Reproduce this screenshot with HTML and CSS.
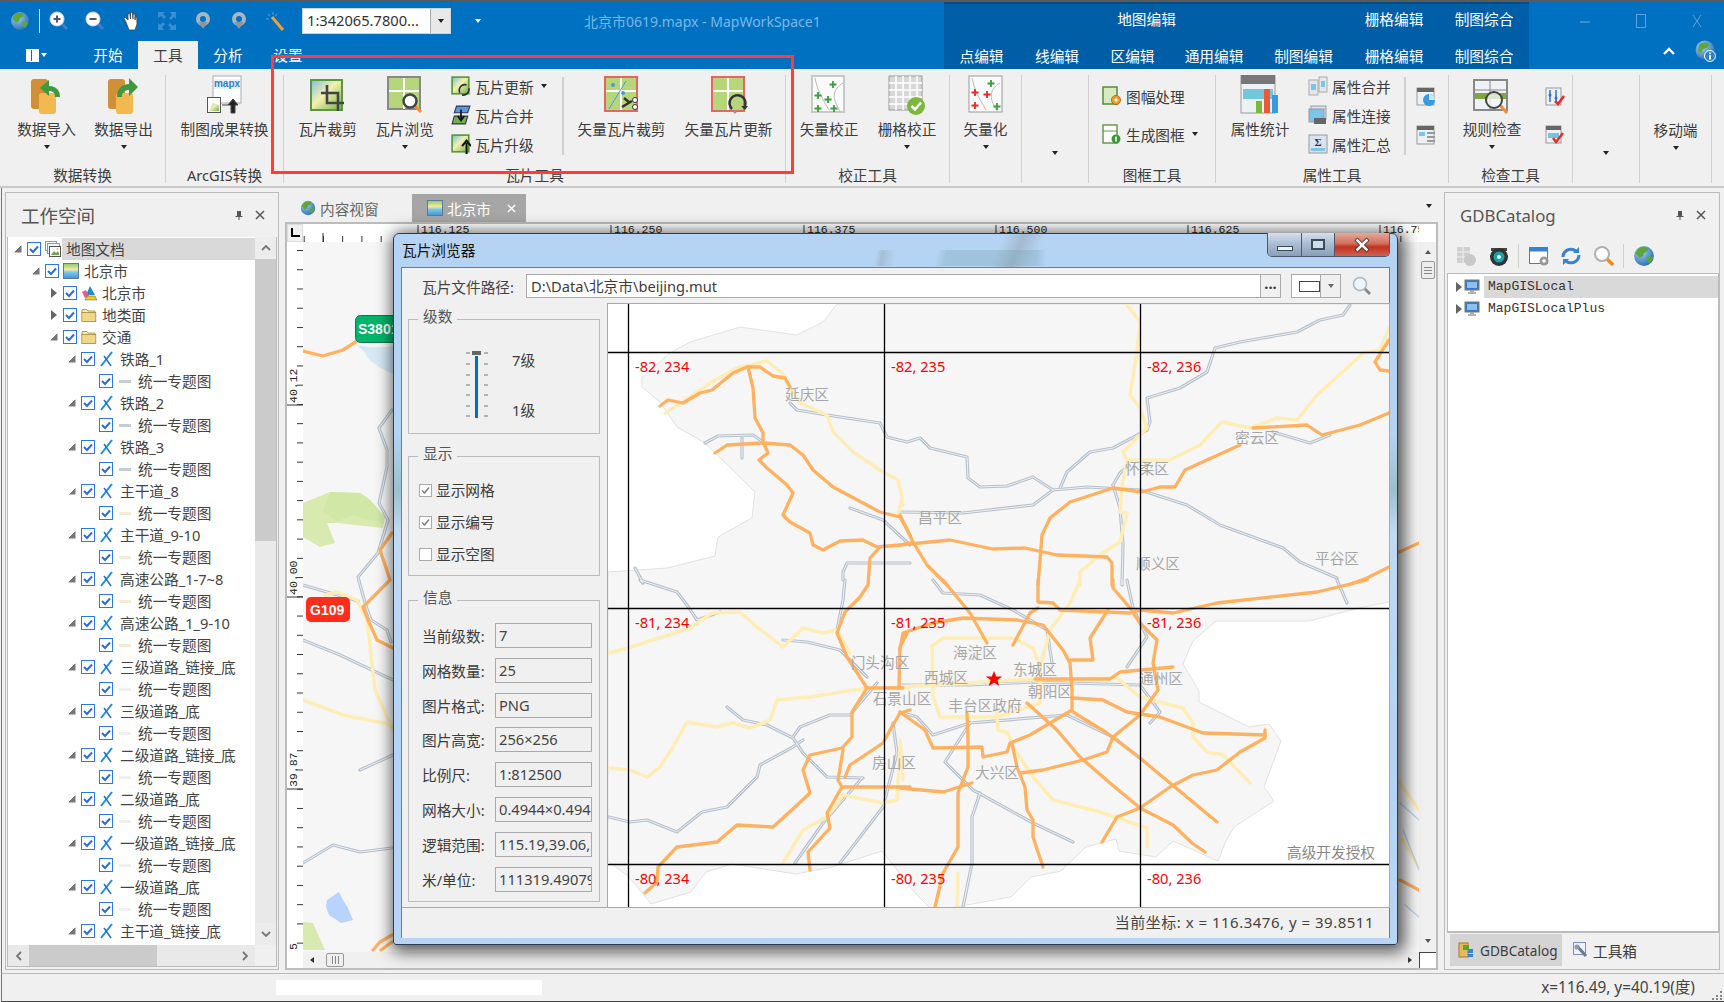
FILE: index.html
```html
<!DOCTYPE html>
<html lang="zh-CN">
<head>
    <meta charset="UTF-8">
    <title>MapWorkSpace1</title>
    <link rel="stylesheet" href="styles.css">
</head>
<body>
<svg class="defs" xmlns="http://www.w3.org/2000/svg">
    <defs>
        <linearGradient id="g-tile" x1="0" y1="0" x2="1" y2="1"><stop offset="0" stop-color="#7cc0e0"/><stop offset=".45" stop-color="#f4f0b0"/><stop offset="1" stop-color="#6fb24c"/></linearGradient>
        <linearGradient id="g-map" x1="0" y1="0" x2="0" y2="1"><stop offset="0" stop-color="#8fc66a"/><stop offset=".4" stop-color="#f3e9a0"/><stop offset=".6" stop-color="#7cc4ea"/><stop offset="1" stop-color="#3f96d8"/></linearGradient>
        <radialGradient id="g-globe" cx=".35" cy=".3" r=".8"><stop offset="0" stop-color="#9fd0f0"/><stop offset="1" stop-color="#2469b0"/></radialGradient>
    </defs>
    <symbol id="globe" viewBox="0 0 20 20"><circle cx="10" cy="10" r="9" fill="url(#g-globe)"/><path d="M5 3c3-2 7-1 9 0l-1 3-3 1-1 3-3 2-2-3-2-1z M12 11l4-1 2 2-3 5-2-2z" fill="#5fa53a"/></symbol>
    <symbol id="q-in" viewBox="0 0 20 20"><path d="M12 12l6 6" stroke="#3f7fd0" stroke-width="3"/><circle cx="8" cy="8" r="7" fill="#fff" stroke="#cfd8e0"/><path d="M4.5 8h7M8 4.5v7" stroke="#556" stroke-width="2"/></symbol>
    <symbol id="q-out" viewBox="0 0 20 20"><path d="M12 12l6 6" stroke="#3f7fd0" stroke-width="3"/><circle cx="8" cy="8" r="7" fill="#fff" stroke="#cfd8e0"/><path d="M4.5 8h7" stroke="#556" stroke-width="2"/></symbol>
    <symbol id="q-hand" viewBox="0 0 20 20"><path d="M5 11L3 7.5l1.5-1L7 9V3l1.8-.5L9.5 8V1.5h1.8L12 8V3h1.8l.4 6V6h1.600L16 13l-2 6H8z" fill="#fff" stroke="#444" stroke-width=".8"/></symbol>
    <symbol id="q-full" viewBox="0 0 20 20"><path d="M1 1h7L6 3l3 3-2 2-3-3-3 2z M19 1v7l-2-2-3 3-2-2 3-3-2-3z M1 19v-7l2 2 3-3 2 2-3 3 2 3z M19 19h-7l2-2-3-3 2-2 3 3 3-2z" fill="#3b8ed2"/></symbol>
    <symbol id="q-prev" viewBox="0 0 20 20"><circle cx="10" cy="8" r="7" fill="#a9b5bf"/><circle cx="10" cy="8" r="3" fill="#0070c0"/><path d="M5 11h10l-5 7z" fill="#8b979f"/></symbol>
    <symbol id="q-wand" viewBox="0 0 20 20"><path d="M7 6l11 13" stroke="#f0a030" stroke-width="3"/><path d="M3 3l2 2M8 1v3M1 8h3M12 3l-2 2" stroke="#3b8ed2" stroke-width="1.6"/></symbol>
    <symbol id="chk" viewBox="0 0 14 14"><rect x=".5" y=".5" width="13" height="13" fill="#fff" stroke="#2a7ae2"/><path d="M3 7l3 3 5-5.5" fill="none" stroke="#2a6fd0" stroke-width="2"/></symbol>
    <symbol id="tick" viewBox="0 0 13 13"><rect x=".5" y=".5" width="12" height="12" fill="#fff" stroke="#aaa"/><path d="M3 6.5L5.5 9 10 3.5" fill="none" stroke="#777" stroke-width="1.4"/></symbol>
    <symbol id="i-doc" viewBox="0 0 16 16"><rect x=".5" y=".5" width="11" height="9" fill="#fff" stroke="#6d9fd0"/><rect x="2.5" y="2.5" width="12" height="10" fill="#eef6ff" stroke="#6d9fd0"/><rect x="4.5" y="5.5" width="11" height="10" fill="#fff" stroke="#555"/><path d="M6 14l3-4 2 2 2-2 1.5 4z" fill="#6aa84f"/><circle cx="12.5" cy="8" r="1" fill="#f0c040"/></symbol>
    <symbol id="i-map" viewBox="0 0 16 16"><rect x=".5" y=".5" width="15" height="15" fill="url(#g-map)" stroke="#5a7a9a"/></symbol>
    <symbol id="i-poly" viewBox="0 0 16 16"><path d="M9 1l5 9H5z" fill="#1f8ad8"/><path d="M1 7l4-2 3 6-4 2z" fill="#e85c90"/><path d="M4 15l2-4h8l2 4z" fill="#f0cc20" stroke="#333" stroke-width=".4"/></symbol>
    <symbol id="i-folder" viewBox="0 0 16 16"><path d="M1 4V2.5h5L7 4h7v2H1z" fill="#f7eaa8" stroke="#a08a40" stroke-width=".8"/><rect x=".8" y="5.5" width="14" height="9" fill="#f1d888" stroke="#a08a40" stroke-width=".8"/></symbol>
    <symbol id="i-line" viewBox="0 0 16 16"><path d="M2 15L13 1" stroke="#1a8fe0" stroke-width="2"/><path d="M5 5l7 10" stroke="#2a6fd0" stroke-width="1.5"/></symbol>
    <symbol id="i-pin" viewBox="0 0 10 10"><path d="M3 1h4v5h1.5v1h-3v3h-1V7h-3V6H3z" fill="#555"/></symbol>
    <symbol id="i-x" viewBox="0 0 10 10"><path d="M1 1l8 8M9 1l-8 8" stroke="#555" stroke-width="1.5"/></symbol>
    <symbol id="i-pc" viewBox="0 0 16 16"><rect x="1" y="1" width="14" height="10" fill="#3a78c8" stroke="#777"/><rect x="3" y="3" width="10" height="6" fill="#8cc0ee"/><path d="M4 14h8M6 12h4" stroke="#999" stroke-width="1.5"/></symbol>
    <symbol id="i-search" viewBox="0 0 20 20"><path d="M12 12l6 6" stroke="#8a8a8a" stroke-width="3"/><circle cx="8" cy="8" r="6.5" fill="#eef4fa" stroke="#a8b8c4" stroke-width="1.5"/></symbol>

    <symbol id="b-import" viewBox="0 0 40 40"><rect x="4" y="4" width="17" height="30" rx="3" fill="#cf9038"/><rect x="12" y="18" width="17" height="21" rx="3" fill="#f1b94f"/><path d="M33 22c0-7-4-11-11-11V5l-9 8 9 8v-5c4 0 6 2 6 6z" fill="#3f9a3f"/></symbol>
    <symbol id="b-export" viewBox="0 0 40 40"><rect x="4" y="4" width="17" height="30" rx="3" fill="#cf9038"/><rect x="12" y="18" width="17" height="21" rx="3" fill="#f1b94f"/><path d="M13 22c0-8 5-13 12-13V3l9 9-9 9v-6c-4 0-7 2-7 7z" fill="#3f9a3f"/></symbol>
    <symbol id="b-crop" viewBox="0 0 40 40"><rect x="3" y="5" width="31" height="30" fill="url(#g-tile)" stroke="#5a9a3c" stroke-width="2"/><path d="M19 10v18h17M13 18h17v18" fill="none" stroke="#444" stroke-width="2.6"/></symbol>
    <symbol id="b-browse" viewBox="0 0 40 40"><rect x="3" y="2" width="32" height="32" fill="#b5d77a" stroke="#888" stroke-width="2"/><path d="M19 3v31M4 16h30" stroke="#fff" stroke-width="2"/><path d="M30 31l6 6" stroke="#f09030" stroke-width="3"/><circle cx="25" cy="26" r="6.5" fill="#fff" stroke="#444" stroke-width="2.5"/></symbol>
    <symbol id="b-vcrop" viewBox="0 0 40 40"><rect x="3" y="2" width="32" height="34" fill="#b5d77a" stroke="#e86464" stroke-width="2"/><path d="M19 3v32M4 16h30" stroke="#fff" stroke-width="2"/><path d="M7 34L24 6" stroke="#4a9ae0"/><circle cx="11" cy="10" r="2" fill="#4a9ae0"/><circle cx="21" cy="18" r="2" fill="#4a9ae0"/><path d="M22 23l6 5M20 32l10-6" stroke="#333" stroke-width="2.5"/><circle cx="33" cy="25" r="2.5" fill="#fff" stroke="#333"/><circle cx="33" cy="32" r="2.5" fill="#fff" stroke="#333"/></symbol>
    <symbol id="b-vupd" viewBox="0 0 40 40"><rect x="3" y="2" width="32" height="34" fill="#b5d77a" stroke="#e86464" stroke-width="2"/><path d="M19 3v32M4 16h30" stroke="#fff" stroke-width="2"/><path d="M23 34a8 8 0 1 1 13-3" fill="none" stroke="#333" stroke-width="2.5"/><path d="M32 31h7l-3 4z" fill="#333"/><circle cx="26" cy="37" r="1.5" fill="#999"/></symbol>
    <symbol id="b-vcorr" viewBox="0 0 40 40"><rect x="3" y="1" width="32" height="36" fill="#fafafa" stroke="#c8c8c8" stroke-width="2"/><path d="M6 3c3 14 6 18 14 32M34 8C24 14 22 22 31 36" fill="none" stroke="#bbb"/><path d="M24 6v7m-3.5-3.5h7M9 17v7m-3.5-3.5h7M19 21v7m-3.5-3.5h7M9 30v7m-3.5-3.5h7M25 30v7m-3.5-3.5h7" stroke="#3aa03a" stroke-width="1.8"/></symbol>
    <symbol id="b-rcorr" viewBox="0 0 40 40"><rect x="2" y="1" width="33" height="34" fill="#d8d8d8" stroke="#999"/><path d="M9 1v34M16 1v34M23 1v34M30 1v34M2 8h33M2 15h33M2 22h33M2 29h33" stroke="#fff" stroke-width="1.5"/><circle cx="29" cy="31" r="9" fill="#7cb83c"/><path d="M24.5 31l3.5 3.5 6-7" fill="none" stroke="#fff" stroke-width="2.5"/></symbol>
    <symbol id="b-vec" viewBox="0 0 40 40"><rect x="3" y="1" width="33" height="36" fill="#fafafa" stroke="#999"/><path d="M6 3c3 14 6 18 14 32M34 8C24 14 22 22 31 36" fill="none" stroke="#bbb"/><path d="M25 5v7m-3.5-3.5h7M31 28v7m-3.5-3.5h7" stroke="#3aa03a" stroke-width="1.8"/><path d="M9 14v7m-3.5-3.5h7M21 16v7m-3.5-3.5h7M9 27v7m-3.5-3.5h7" stroke="#e82a2a" stroke-width="1.8"/></symbol>
    <symbol id="b-stats" viewBox="0 0 40 40"><rect x="1" y="0" width="34" height="38" fill="#eef1f4" stroke="#999"/><rect x="1" y="0" width="34" height="9" fill="#777"/><rect x="3" y="14" width="30" height="10" fill="#6fc8dc"/><rect x="16" y="26" width="6" height="12" fill="#7cb83c"/><rect x="24" y="14" width="6" height="24" fill="#e85a3a"/><rect x="32" y="20" width="6" height="18" fill="#3a9ae0"/></symbol>
    <symbol id="b-rule" viewBox="0 0 40 40"><rect x="2" y="5" width="33" height="30" fill="#eef2f6" stroke="#888" stroke-width="2"/><path d="M18 6v28M3 15h31" stroke="#888"/><rect x="3" y="18" width="31" height="6" fill="#7ea83c"/><path d="M28 30l7 8" stroke="#f09030" stroke-width="3"/><circle cx="22" cy="25" r="8" fill="#f4f4f4" fill-opacity=".8" stroke="#444" stroke-width="2"/></symbol>

    <symbol id="s-upd" viewBox="0 0 18 18"><rect x="1" y="1" width="15" height="15" fill="url(#g-tile)" stroke="#5a9a3c" stroke-width="1.5"/><path d="M8 15a5 5 0 0 1 6-7M10 17a5 5 0 0 0 6-6" fill="none" stroke="#333" stroke-width="1.5"/></symbol>
    <symbol id="s-merge" viewBox="0 0 18 18"><path d="M5 1h12l-2 6H3z" fill="#5a9ae0" stroke="#335"/><path d="M3 10h12l-2 7H1z" fill="#6fb24c" stroke="#335"/><path d="M9 4v9m-3-3l3 4 3-4" fill="none" stroke="#111" stroke-width="1.5"/></symbol>
    <symbol id="s-up" viewBox="0 0 18 18"><rect x="1" y="1" width="15" height="15" fill="url(#g-tile)" stroke="#5a9a3c" stroke-width="1.5"/><path d="M14 18V8m-4 3l4-5 4 5" fill="none" stroke="#111" stroke-width="1.8"/></symbol>
    <symbol id="s-proc" viewBox="0 0 20 20"><rect x="1" y="1" width="14" height="17" fill="#d8eac0" stroke="#5a8a3c" stroke-width="1.5"/><circle cx="14" cy="14" r="4.5" fill="#f0a030" stroke="#a86a10"/><circle cx="14" cy="14" r="1.5" fill="#fff"/></symbol>
    <symbol id="s-gen" viewBox="0 0 20 20"><rect x="1" y="1" width="14" height="18" fill="#fff" stroke="#6a9a4c" stroke-width="1.5"/><path d="M1 7h14" stroke="#6a9a4c"/><circle cx="14" cy="15" r="4.5" fill="#3a9a3a"/><path d="M14 12.5v5" stroke="#fff" stroke-width="1.5"/></symbol>
    <symbol id="s-amerge" viewBox="0 0 20 20"><rect x="1" y="4" width="9" height="15" fill="#e4e8ec" stroke="#aaa"/><rect x="11" y="1" width="8" height="15" fill="#e4e8ec" stroke="#aaa"/><rect x="3" y="8" width="5" height="6" fill="#7cc4ea"/><rect x="13" y="5" width="4" height="6" fill="#7cc4ea"/></symbol>
    <symbol id="s-ajoin" viewBox="0 0 20 20"><rect x="3" y="1" width="15" height="13" fill="#d8e4f0" stroke="#999"/><rect x="1" y="4" width="15" height="13" fill="#7cc4ea" stroke="#999"/><rect x="6" y="13" width="12" height="6" fill="#666"/></symbol>
    <symbol id="s-pie" viewBox="0 0 20 20"><rect x="1" y="1" width="17" height="17" fill="#eef1f4" stroke="#999"/><rect x="1" y="1" width="17" height="4" fill="#666"/><circle cx="13" cy="13" r="6" fill="#3a9ae0"/><path d="M13 13V7a6 6 0 0 1 6 6z" fill="#cfe6f8"/></symbol>
    <symbol id="s-list" viewBox="0 0 20 20"><rect x="1" y="1" width="17" height="18" fill="#eef1f4" stroke="#999"/><rect x="1" y="1" width="17" height="4" fill="#666"/><rect x="3" y="7" width="6" height="4" fill="#7cc4ea"/><path d="M11 8h8M11 12h8M11 16h8" stroke="#999" stroke-width="2"/></symbol>
    <symbol id="s-chk1" viewBox="0 0 20 20"><rect x="1" y="1" width="15" height="17" fill="#eef1f4" stroke="#999"/><path d="M5 3v12M11 3v12" stroke="#2a6fd0" stroke-width="1.5"/><circle cx="5" cy="8" r="1.5" fill="#2a6fd0"/><circle cx="11" cy="11" r="1.5" fill="#2a6fd0"/><path d="M10 14l3 3 6-8" fill="none" stroke="#e82a2a" stroke-width="2.5"/></symbol>
    <symbol id="s-chk2" viewBox="0 0 20 20"><rect x="1" y="1" width="15" height="17" fill="#eef1f4" stroke="#999"/><rect x="1" y="1" width="15" height="4" fill="#666"/><rect x="3" y="8" width="11" height="5" fill="#6fc8dc"/><path d="M8 13l3 4 7-9" fill="none" stroke="#e82a2a" stroke-width="2.5"/></symbol>

    <symbol id="t-db" viewBox="0 0 22 22"><rect x="2" y="2" width="13" height="16" fill="#d0d0d0"/><path d="M2 7h13M2 12h13M8 2v16" stroke="#f0f0f0"/><circle cx="15" cy="15" r="6" fill="#c8c8c8"/></symbol>
    <symbol id="t-cam" viewBox="0 0 22 22"><path d="M3 3h16v3H3z" fill="#444"/><circle cx="11" cy="12" r="9" fill="#333"/><circle cx="11" cy="12" r="5.5" fill="#19a0a8"/><circle cx="11" cy="12" r="2" fill="#dff"/></symbol>
    <symbol id="t-set" viewBox="0 0 22 22"><rect x="1.5" y="2.5" width="18" height="16" fill="#fff" stroke="#3a82d0"/><rect x="1.5" y="2.5" width="18" height="4" fill="#3a82d0"/><circle cx="16" cy="16" r="4.5" fill="#999"/><circle cx="16" cy="16" r="1.8" fill="#fff"/></symbol>
    <symbol id="t-ref" viewBox="0 0 22 22"><path d="M3 12a8 8 0 0 1 13-6M19 10a8 8 0 0 1-13 6" fill="none" stroke="#3a82d0" stroke-width="3"/><path d="M13 8l6 0 0-6zM9 14l-6 0 0 6z" fill="#3a82d0"/></symbol>
    <symbol id="t-find" viewBox="0 0 22 22"><path d="M13 13l7 7" stroke="#f08a20" stroke-width="3.5"/><circle cx="9" cy="9" r="7" fill="#fff" stroke="#b0b0b0" stroke-width="2"/></symbol>
</svg>

<div class="app">
    <div class="top">
        <div class="top-main">
            <div class="qat">
                <svg class="q-globe"><use href="#globe"/></svg>
                <span class="q-sep"></span>
                <div class="q-icons">
                    <svg class="q-ic"><use href="#q-in"/></svg>
                    <svg class="q-ic"><use href="#q-out"/></svg>
                    <svg class="q-ic"><use href="#q-hand"/></svg>
                    <svg class="q-ic"><use href="#q-full"/></svg>
                    <svg class="q-ic"><use href="#q-prev"/></svg>
                    <svg class="q-ic"><use href="#q-prev"/></svg>
                    <svg class="q-ic"><use href="#q-wand"/></svg>
                </div>
                <div class="scale-combo"><span class="scale-value">1:342065.7800...</span><span class="scale-btn"><i class="arrow"></i></span></div>
                <i class="arrow arrow-white q-more"></i>
                <span class="app-title">北京市0619.mapx - MapWorkSpace1</span>
            </div>
            <div class="tabs">
                <div class="file-btn"><span class="file-ic"></span><i class="arrow arrow-white"></i></div>
                <div class="tab">开始</div>
                <div class="tab active">工具</div>
                <div class="tab">分析</div>
                <div class="tab">设置</div>
            </div>
        </div>
        <div class="context">
            <div class="ctx-head ctx-wide">地图编辑</div>
            <div class="ctx-head">栅格编辑</div>
            <div class="ctx-head">制图综合</div>
            <div>点编辑</div><div>线编辑</div><div>区编辑</div><div>通用编辑</div><div>制图编辑</div><div>栅格编辑</div><div>制图综合</div>
        </div>
        <div class="top-right">
            <div class="win-btns">
                <svg class="win-ic" viewBox="0 0 14 14"><path d="M2 8h10" stroke="#5aa2e0" stroke-width="1.2"/></svg>
                <svg class="win-ic" viewBox="0 0 14 14"><rect x="2.5" y="0.5" width="9" height="13" fill="none" stroke="#5aa2e0"/></svg>
                <svg class="win-ic" viewBox="0 0 14 14"><path d="M3 1l8 12M11 1L3 13" stroke="#5aa2e0"/></svg>
            </div>
            <div class="help-row">
                <svg class="chev" viewBox="0 0 12 8"><path d="M1 7l5-5 5 5" fill="none" stroke="#fff" stroke-width="2.4"/></svg>
                <svg class="help" viewBox="0 0 22 22"><circle cx="10" cy="10" r="9.5" fill="url(#g-globe)"/><path d="M4 5c3-3 8-3 10-1l-2 4-4 1-2 4-3-2z" fill="#5fa53a"/><circle cx="15" cy="16" r="5.5" fill="#2a7fd0" stroke="#fff"/><rect x="14" y="15" width="2" height="4.5" fill="#fff"/><rect x="14" y="12.5" width="2" height="1.5" fill="#fff"/></svg>
            </div>
        </div>
    </div>

    <div class="ribbon">
        <div class="group w-data">
            <div class="group-body pad-8">
                <div class="big w-77"><svg class="big-ic"><use href="#b-import"/></svg><span>数据导入</span><i class="arrow"></i></div>
                <div class="big w-77"><svg class="big-ic"><use href="#b-export"/></svg><span>数据导出</span><i class="arrow"></i></div>
            </div>
            <div class="group-label">数据转换</div>
        </div>
        <div class="group w-arc">
            <div class="group-body">
                <div class="big w-full">
                    <svg class="big-ic" viewBox="0 0 40 40"><rect x="8" y="1" width="28" height="27" fill="#fff" stroke="#aaa"/><rect x="9" y="4" width="26" height="10" fill="#eaf3fb"/><text x="22" y="12" text-anchor="middle" font-family="Liberation Sans" font-size="10" font-weight="bold" fill="#2a7fd0">mapx</text><rect x="2.5" y="22.5" width="13" height="15" fill="#fff" stroke="#555"/><path d="M4 36l4-8 6 2v6z" fill="url(#g-tile)"/><path d="M17 30h6M26 38v-8h-3l5-6 5 6h-3v8z" fill="#222" stroke="#444"/></svg>
                    <span>制图成果转换</span>
                </div>
            </div>
            <div class="group-label">ArcGIS转换</div>
        </div>
        <div class="group w-tile">
            <div class="group-body pad-5">
                <div class="big w-77"><svg class="big-ic"><use href="#b-crop"/></svg><span>瓦片裁剪</span></div>
                <div class="big w-77"><svg class="big-ic"><use href="#b-browse"/></svg><span>瓦片浏览</span><i class="arrow"></i></div>
                <div class="small-col tile-col">
                    <div class="small"><svg class="small-ic"><use href="#s-upd"/></svg><span>瓦片更新</span><i class="arrow small-arrow"></i></div>
                    <div class="small"><svg class="small-ic"><use href="#s-merge"/></svg><span>瓦片合并</span></div>
                    <div class="small"><svg class="small-ic"><use href="#s-up"/></svg><span>瓦片升级</span></div>
                </div>
                <span class="inner-sep"></span>
                <div class="big w-107 ml-4"><svg class="big-ic"><use href="#b-vcrop"/></svg><span>矢量瓦片裁剪</span></div>
                <div class="big w-107"><svg class="big-ic"><use href="#b-vupd"/></svg><span>矢量瓦片更新</span></div>
            </div>
            <div class="group-label">瓦片工具</div>
        </div>
        <div class="group w-corr">
            <div class="group-body pad-4">
                <div class="big w-78"><svg class="big-ic"><use href="#b-vcorr"/></svg><span>矢量校正</span></div>
                <div class="big w-78"><svg class="big-ic"><use href="#b-rcorr"/></svg><span>栅格校正</span><i class="arrow"></i></div>
            </div>
            <div class="group-label">校正工具</div>
        </div>
        <div class="group w-vec">
            <div class="group-body">
                <div class="big w-full"><svg class="big-ic"><use href="#b-vec"/></svg><span>矢量化</span><i class="arrow"></i></div>
            </div>
        </div>
        <div class="group w-more">
            <div class="group-body">
                <div class="big w-full empty"><i class="arrow"></i></div>
            </div>
        </div>
        <div class="group w-frame">
            <div class="group-body">
                <div class="frame-col">
                    <div class="small"><svg class="small-ic"><use href="#s-proc"/></svg><span>图幅处理</span></div>
                    <div class="small"><svg class="small-ic"><use href="#s-gen"/></svg><span>生成图框</span><i class="arrow small-arrow"></i></div>
                </div>
            </div>
            <div class="group-label">图框工具</div>
        </div>
        <div class="group w-attr">
            <div class="group-body">
                <div class="big w-88"><svg class="big-ic"><use href="#b-stats"/></svg><span>属性统计</span></div>
                <div class="small-col attr-col">
                    <div class="small"><svg class="small-ic"><use href="#s-amerge"/></svg><span>属性合并</span></div>
                    <div class="small"><svg class="small-ic"><use href="#s-ajoin"/></svg><span>属性连接</span></div>
                    <div class="small">
                        <svg class="small-ic" viewBox="0 0 20 20"><rect x="1" y="1" width="18" height="18" fill="#d8e4f0" stroke="#999"/><rect x="3" y="14" width="14" height="3" fill="#7cc4ea"/><text x="10" y="12" text-anchor="middle" font-family="Liberation Serif" font-size="11" font-weight="bold" fill="#333">Σ</text></svg>
                        <span>属性汇总</span>
                    </div>
                </div>
                <span class="inner-sep"></span>
                <div class="icon-col">
                    <svg class="small-ic"><use href="#s-pie"/></svg>
                    <svg class="small-ic"><use href="#s-list"/></svg>
                </div>
            </div>
            <div class="group-label">属性工具</div>
        </div>
        <div class="group w-rule">
            <div class="group-body">
                <div class="big w-86"><svg class="big-ic"><use href="#b-rule"/></svg><span>规则检查</span><i class="arrow"></i></div>
                <div class="icon-col ml-4">
                    <svg class="small-ic"><use href="#s-chk1"/></svg>
                    <svg class="small-ic"><use href="#s-chk2"/></svg>
                </div>
            </div>
            <div class="group-label">检查工具</div>
        </div>
        <div class="group w-more">
            <div class="group-body">
                <div class="big w-full empty"><i class="arrow"></i></div>
            </div>
        </div>
        <div class="group w-mobile">
            <div class="group-body">
                <div class="big w-full text-only"><span>移动端</span><i class="arrow"></i></div>
            </div>
        </div>
    </div>

    <div class="main">
        <div class="panel left-panel">
            <div class="panel-head">
                <span class="panel-title">工作空间</span>
                <svg class="pin"><use href="#i-pin"/></svg>
                <svg class="close"><use href="#i-x"/></svg>
            </div>
            <div class="tree-box">
                <div class="tree-main">
                    <div class="tree">
                        <div class="row lv0"><i class="exp"></i><svg class="chk"><use href="#chk"/></svg><svg class="ti"><use href="#i-doc"/></svg><span class="hl">地图文档</span></div>
                        <div class="row lv1"><i class="exp"></i><svg class="chk"><use href="#chk"/></svg><svg class="ti"><use href="#i-map"/></svg><span>北京市</span></div>
                        <div class="row lv2"><i class="exp shut"></i><svg class="chk"><use href="#chk"/></svg><svg class="ti"><use href="#i-poly"/></svg><span>北京市</span></div>
                        <div class="row lv2"><i class="exp shut"></i><svg class="chk"><use href="#chk"/></svg><svg class="ti"><use href="#i-folder"/></svg><span>地类面</span></div>
                        <div class="row lv2"><i class="exp"></i><svg class="chk"><use href="#chk"/></svg><svg class="ti"><use href="#i-folder"/></svg><span>交通</span></div>
                        <div class="row lv3"><i class="exp"></i><svg class="chk"><use href="#chk"/></svg><svg class="ti"><use href="#i-line"/></svg><span>铁路_1</span></div>
                        <div class="row lv4"><svg class="chk"><use href="#chk"/></svg><i class="leg grey"></i><span>统一专题图</span></div>
                        <div class="row lv3"><i class="exp"></i><svg class="chk"><use href="#chk"/></svg><svg class="ti"><use href="#i-line"/></svg><span>铁路_2</span></div>
                        <div class="row lv4"><svg class="chk"><use href="#chk"/></svg><i class="leg grey"></i><span>统一专题图</span></div>
                        <div class="row lv3"><i class="exp"></i><svg class="chk"><use href="#chk"/></svg><svg class="ti"><use href="#i-line"/></svg><span>铁路_3</span></div>
                        <div class="row lv4"><svg class="chk"><use href="#chk"/></svg><i class="leg grey"></i><span>统一专题图</span></div>
                        <div class="row lv3"><i class="exp"></i><svg class="chk"><use href="#chk"/></svg><svg class="ti"><use href="#i-line"/></svg><span>主干道_8</span></div>
                        <div class="row lv4"><svg class="chk"><use href="#chk"/></svg><i class="leg pale"></i><span>统一专题图</span></div>
                        <div class="row lv3"><i class="exp"></i><svg class="chk"><use href="#chk"/></svg><svg class="ti"><use href="#i-line"/></svg><span>主干道_9-10</span></div>
                        <div class="row lv4"><svg class="chk"><use href="#chk"/></svg><i class="leg pale"></i><span>统一专题图</span></div>
                        <div class="row lv3"><i class="exp"></i><svg class="chk"><use href="#chk"/></svg><svg class="ti"><use href="#i-line"/></svg><span>高速公路_1-7~8</span></div>
                        <div class="row lv4"><svg class="chk"><use href="#chk"/></svg><i class="leg pale"></i><span>统一专题图</span></div>
                        <div class="row lv3"><i class="exp"></i><svg class="chk"><use href="#chk"/></svg><svg class="ti"><use href="#i-line"/></svg><span>高速公路_1_9-10</span></div>
                        <div class="row lv4"><svg class="chk"><use href="#chk"/></svg><i class="leg pale"></i><span>统一专题图</span></div>
                        <div class="row lv3"><i class="exp"></i><svg class="chk"><use href="#chk"/></svg><svg class="ti"><use href="#i-line"/></svg><span>三级道路_链接_底</span></div>
                        <div class="row lv4"><svg class="chk"><use href="#chk"/></svg><i class="leg"></i><span>统一专题图</span></div>
                        <div class="row lv3"><i class="exp"></i><svg class="chk"><use href="#chk"/></svg><svg class="ti"><use href="#i-line"/></svg><span>三级道路_底</span></div>
                        <div class="row lv4"><svg class="chk"><use href="#chk"/></svg><i class="leg"></i><span>统一专题图</span></div>
                        <div class="row lv3"><i class="exp"></i><svg class="chk"><use href="#chk"/></svg><svg class="ti"><use href="#i-line"/></svg><span>二级道路_链接_底</span></div>
                        <div class="row lv4"><svg class="chk"><use href="#chk"/></svg><i class="leg"></i><span>统一专题图</span></div>
                        <div class="row lv3"><i class="exp"></i><svg class="chk"><use href="#chk"/></svg><svg class="ti"><use href="#i-line"/></svg><span>二级道路_底</span></div>
                        <div class="row lv4"><svg class="chk"><use href="#chk"/></svg><i class="leg"></i><span>统一专题图</span></div>
                        <div class="row lv3"><i class="exp"></i><svg class="chk"><use href="#chk"/></svg><svg class="ti"><use href="#i-line"/></svg><span>一级道路_链接_底</span></div>
                        <div class="row lv4"><svg class="chk"><use href="#chk"/></svg><i class="leg"></i><span>统一专题图</span></div>
                        <div class="row lv3"><i class="exp"></i><svg class="chk"><use href="#chk"/></svg><svg class="ti"><use href="#i-line"/></svg><span>一级道路_底</span></div>
                        <div class="row lv4"><svg class="chk"><use href="#chk"/></svg><i class="leg"></i><span>统一专题图</span></div>
                        <div class="row lv3"><i class="exp"></i><svg class="chk"><use href="#chk"/></svg><svg class="ti"><use href="#i-line"/></svg><span>主干道_链接_底</span></div>
                    </div>
                    <div class="vscroll">
                        <span class="sb-btn"><svg viewBox="0 0 10 6"><path d="M1 5l4-4 4 4" fill="none" stroke="#777" stroke-width="1.8"/></svg></span>
                        <span class="sb-thumb"></span>
                        <span class="sb-track"></span>
                        <span class="sb-btn"><svg viewBox="0 0 10 6"><path d="M1 1l4 4 4-4" fill="none" stroke="#777" stroke-width="1.8"/></svg></span>
                    </div>
                </div>
                <div class="hscroll">
                    <span class="hb-btn"><svg viewBox="0 0 6 10"><path d="M5 1L1 5l4 4" fill="none" stroke="#777" stroke-width="1.8"/></svg></span>
                    <span class="hb-thumb"></span>
                    <span class="hb-track"></span>
                    <span class="hb-btn"><svg viewBox="0 0 6 10"><path d="M1 1l4 4-4 4" fill="none" stroke="#777" stroke-width="1.8"/></svg></span>
                    <span class="hb-corner"></span>
                </div>
            </div>
        </div>

        <div class="center">
            <div class="doc-tabs">
                <div class="doc-tab"><svg class="tab-ic"><use href="#globe"/></svg>内容视窗</div>
                <div class="doc-tab active"><svg class="tab-ic"><use href="#i-map"/></svg>北京市<svg class="tab-x"><use href="#i-x"/></svg></div>
                <i class="arrow doc-more"></i>
            </div>
            <div class="frame">
                <div class="ruler-corner"><span></span></div>
                <svg class="ruler-top" viewBox="303 224 1116 18">
                    <defs><pattern id="tick-x" x="303.7" y="224" width="19.24" height="18" patternUnits="userSpaceOnUse"><rect x="0" y="12" width="1" height="6" fill="#333"/></pattern></defs>
                    <rect x="303" y="224" width="1116" height="18" fill="url(#tick-x)"/>
                    <path d="M323 233v9M418 225v17M611 225v17M804 225v17M996 225v17M1188 225v17M1380 225v17" stroke="#333"/>
                    <text class="ruler-text" x="421" y="233">116.125</text>
                    <text class="ruler-text" x="614" y="233">116.250</text>
                    <text class="ruler-text" x="807" y="233">116.375</text>
                    <text class="ruler-text" x="999" y="233">116.500</text>
                    <text class="ruler-text" x="1191" y="233">116.625</text>
                    <text class="ruler-text" x="1383" y="233">116.75</text>
                </svg>
                <svg class="ruler-left" viewBox="287 242 16 710">
                    <defs><pattern id="tick-y" x="287" y="250" width="16" height="19.24" patternUnits="userSpaceOnUse"><rect x="10" y="0" width="6" height="1" fill="#333"/></pattern></defs>
                    <rect x="287" y="242" width="16" height="710" fill="url(#tick-y)"/>
                    <path d="M287 405h16M287 597h16M287 789h16" stroke="#333"/>
                    <text class="ruler-text" transform="translate(297 403) rotate(-90)">40.12</text>
                    <text class="ruler-text" transform="translate(297 595) rotate(-90)">40.00</text>
                    <text class="ruler-text" transform="translate(297 787) rotate(-90)">39.87</text>
                    <text class="ruler-text" transform="translate(297 950) rotate(-90)">5</text>
                </svg>
                <svg class="canvas" viewBox="303 242 1116 710">
                    <rect x="303" y="242" width="1116" height="710" fill="#f6f6f6"/>
                    <path d="M355 344c8 4 30 4 38 2v28c-14-6-26-14-28-22z" fill="#d6e8f4"/>
                    <path d="M303 503l27-11 30 1 10 7 15 17-2 11-46-5-10 0 8 20-15 4-17-10z" fill="#d8eab0"/>
                    <path d="M330 492l30 1 10 7 15 17-2 6-30-8-16 6-14-10z" fill="#d0e7a6"/>
                    <path d="M327 900l12-8 4 8 5 8 5 12-12 3-12-8-3-8z" fill="#b9d3ff"/>
                    <path d="M303 922l10 1 12 27h-22z" fill="#d8eab0"/>
                    <path d="M392 410l-13 18 8 22v17l-8 36 9 17-10 33-20 24 7 26 6 17 16 10 4 12M303 863l30-18 27 7 32-4M303 640l37 15 53 25M303 585l55 16M360 770l33-15" class="m-grey"/>
                    <path d="M392 410l-13 18 8 22v17l-8 36 9 17-10 33-20 24 7 26 6 17 16 10 4 12M303 863l30-18 27 7 32-4M303 640l37 15 53 25M303 585l55 16M360 770l33-15" class="m-grey-in"/>
                    <path d="M325 595l12-3 20 8 10 20 8 70 18 40M303 700l40 15 50 10" class="m-yellow"/>
                    <path d="M303 351l20 5 20-6 14-9M392 533l-12 17 10 30-27 27 5 13 9 20 20 10M373 950l7-8 12-7M381 950l11-8" class="m-orange"/>
                    <path d="M1397 553l22-10M1400 880l19 10" class="m-orange"/>
                    <path d="M1403 840l16 27M1398 780l21 30" class="m-yellow"/>
                    <path d="M1403 830l16 40M1400 803l19 17M1405 905l14 12" class="m-blue"/>
                    <rect x="355.5" y="315.5" width="50" height="27" rx="5" fill="#00b56a" stroke="#0a7a4c"/>
                    <text class="m-shield" x="358" y="334">S3801</text>
                    <rect x="306" y="597" width="44" height="25" rx="5" fill="#ff2d1c"/>
                    <text class="m-shield" x="310" y="615">G109</text>
                </svg>
                <div class="vbar">
                    <i class="arrow up"></i>
                    <span class="vbar-thumb"><b></b><b></b><b></b></span>
                    <i class="arrow"></i>
                </div>
                <span></span>
                <div class="hbar">
                    <i class="arrow left"></i>
                    <span class="hbar-thumb"><b></b><b></b><b></b></span>
                    <i class="arrow right"></i>
                </div>
                <span class="bar-corner"></span>
            </div>
        </div>

        <div class="panel right-panel">
            <div class="panel-head">
                <span class="panel-title latin">GDBCatalog</span>
                <svg class="pin"><use href="#i-pin"/></svg>
                <svg class="close"><use href="#i-x"/></svg>
            </div>
            <div class="gdb-tools">
                <svg class="t-ic"><use href="#t-db"/></svg>
                <svg class="t-ic"><use href="#t-cam"/></svg>
                <span class="t-sep"></span>
                <svg class="t-ic"><use href="#t-set"/></svg>
                <svg class="t-ic"><use href="#t-ref"/></svg>
                <svg class="t-ic"><use href="#t-find"/></svg>
                <span class="t-sep"></span>
                <svg class="t-ic"><use href="#globe"/></svg>
            </div>
            <div class="gdb-tree">
                <div class="gdb-row"><i class="exp shut"></i><svg class="ti"><use href="#i-pc"/></svg><span class="hl">MapGISLocal</span></div>
                <div class="gdb-row"><i class="exp shut"></i><svg class="ti"><use href="#i-pc"/></svg><span>MapGISLocalPlus</span></div>
            </div>
            <div class="gdb-tabs">
                <div class="gdb-tab active"><svg class="ti" viewBox="0 0 16 16"><rect x="1" y="1" width="9" height="14" fill="#e8b860" stroke="#a87820"/><rect x="5" y="3" width="6" height="5" fill="#5aa820"/><rect x="10" y="7" width="5" height="4" fill="#3a82d0"/><rect x="10" y="12" width="5" height="3" fill="#3a82d0"/></svg>GDBCatalog</div>
                <div class="gdb-tab"><svg class="ti" viewBox="0 0 16 16"><rect x=".5" y=".5" width="12" height="12" fill="#eef2fa" stroke="#7a8ec0"/><path d="M4 4l9 10" stroke="#6a7a94" stroke-width="3"/><circle cx="4" cy="5" r="2.5" fill="#8a9ab4"/></svg>工具箱</div>
            </div>
        </div>
    </div>

    <div class="status">
        <span class="status-box"></span>
        <span class="status-text">x=116.49, y=40.19(度)</span>
        <svg class="grip" viewBox="0 0 10 10"><path d="M8 1h2v2H8zM4 5h2v2H4zM8 5h2v2H8zM0 8h2v2H0zM4 8h2v2H4zM8 8h2v2H8z" fill="#888"/></svg>
    </div>

    <div class="mark-box"></div>

    <div class="dialog">
        <div class="dlg-title">
            <span>瓦片浏览器</span>
            <div class="dlg-btns">
                <span class="dlg-btn min"><b></b></span>
                <span class="dlg-btn max"><b></b></span>
                <span class="dlg-btn shut"><svg viewBox="0 0 16 16"><path d="M2 2l12 12M14 2L2 14" stroke="#3a2020" stroke-width="4"/><path d="M2.5 2.5l11 11M13.5 2.5l-11 11" stroke="#fff" stroke-width="2.6"/></svg></span>
            </div>
        </div>
        <div class="dlg-client">
            <div class="path-row">
                <label class="path-label">瓦片文件路径:</label>
                <div class="path-input"><span>D:\Data\北京市\beijing.mut</span><b>...</b></div>
                <div class="mini-combo"><span class="swatch"></span><span class="mini-btn"><i class="arrow"></i></span></div>
                <svg class="path-search"><use href="#i-search"/></svg>
            </div>
            <div class="dlg-content">
                <div class="dlg-side">
                    <fieldset class="fs fs-level">
                        <legend>级数</legend>
                        <div class="level-box">
                            <svg class="slider" viewBox="0 0 24 70">
                                <path d="M1 3h4M1 14h4M1 25h4M1 35h4M1 45h4M1 56h4M1 66h4M19 3h4M19 14h4M19 25h4M19 35h4M19 45h4M19 56h4M19 66h4" stroke="#777"/>
                                <rect x="10" y="6" width="3" height="62" fill="#0070c0"/>
                                <rect x="7" y="1" width="9" height="4" fill="#666"/>
                            </svg>
                            <div class="level-marks"><span>7级</span><span>1级</span></div>
                        </div>
                    </fieldset>
                    <fieldset class="fs fs-show">
                        <legend>显示</legend>
                        <div class="show-list">
                            <div class="show-row"><svg class="tick"><use href="#tick"/></svg>显示网格</div>
                            <div class="show-row"><svg class="tick"><use href="#tick"/></svg>显示编号</div>
                            <div class="show-row"><span class="tick-off"></span>显示空图</div>
                        </div>
                    </fieldset>
                    <fieldset class="fs fs-info">
                        <legend>信息</legend>
                        <div class="info-grid">
                            <span>当前级数:</span><div class="val">7</div>
                            <span>网格数量:</span><div class="val">25</div>
                            <span>图片格式:</span><div class="val">PNG</div>
                            <span>图片高宽:</span><div class="val">256×256</div>
                            <span>比例尺:</span><div class="val">1:812500</div>
                            <span>网格大小:</span><div class="val">0.4944×0.4944</div>
                            <span>逻辑范围:</span><div class="val">115.19,39.06,117.38,41.25</div>
                            <span>米/单位:</span><div class="val">111319.49079</div>
                        </div>
                    </fieldset>
                </div>
                <div class="tile-map">
                    <svg class="tile-svg" viewBox="608 304 781 603">
                        <defs>
                            <g id="grey-roads">
                                <path d="M790 403l7 7 30 5 53 8 7 14 20 5 13-4 10 10 37 9 1 21 12 9 27-1 26-9 20 13 34-3 53 3 47 15 33 20 63 23 17 14 37 16"/>
                                <path d="M1337 580l10 23"/>
                                <path d="M1053 490l-20 15-70 8-63-1"/>
                                <path d="M1060 488l7-16 23-20 23-4 34-18"/>
                                <path d="M1350 305l-7 10-23 5-23 12-57 10-25 6-8 24-27 16-33 10 3 24-3 8"/>
                                <path d="M1113 485l7 23 3 37-1 40v-5"/>
                                <path d="M1113 485l7-12 7-6"/>
                                <path d="M1273 432l37 11 20-8"/>
                                <path d="M705 443l13-7 35-1 10 7M742 438v20"/>
                                <path d="M635 568l8 15-3-3 37 12 10 13 10 15 23-8"/>
                                <path d="M843 580v-8l4-9h63M845 580l-2 20-6 30"/>
                                <path d="M850 508l33 12 27 25"/>
                                <path d="M609 817l21 5 17-2 30 12 25-20 25-5 30-30 3-12 33-18 10-7"/>
                                <path d="M727 707l16 13 24 5 26 13 10 15 24 24 36 1"/>
                                <path d="M793 737l7-10 30-12h20l27-32"/>
                                <path d="M783 640l24 2 33 8 27 27"/>
                                <path d="M795 863l28-40 39-45M840 863l43-56 14-54-4-30"/>
                                <path d="M933 580l10 13 37 2 33 15 34 20 5 33"/>
                                <path d="M1127 580l6 28 14 29-20 30"/>
                                <path d="M900 685h70l63-3 107 3 20 27-10 11"/>
                                <path d="M970 723l-37 12-16-18-17-5"/>
                                <path d="M970 723l97-8 46 22 27 21"/>
                                <path d="M970 723l-25 39 28 28 60 33 40 19"/>
                                <path d="M980 793l-8 24v46l-9 44"/>
                            </g>
                        </defs>
                        <rect x="608" y="304" width="781" height="603" fill="#fff"/>
                        <path class="m-region" d="M837 304l-14 18-26 13-57-8-50 15-20 11-28 24v10l18 15 17 25 28 16 50 49-3 26-34 19-3 19-48 12-59 4v289l21 16 22 27 40-12 15-20 26-8 64 10 36-7 50-16 34 43 17 17 78-14 20-20 30-6 25-24 30-8 3 12 37 6 17-16 45 20 8-20 8-14 40-26-10-14 17-46-12-17-20 3-50-25v-11l-16-27 10-23 23-20h93l54-14 42-8V304z"/>
                        <use href="#grey-roads" class="m-grey"/>
                        <use href="#grey-roads" class="m-grey-in"/>
                        <g class="m-yellow">
                            <path d="M665 413l18-11 27-19 27-15 30-7 15 12 8 15 10 15 27 12 6 17 20 20 30 20 15 8 4 18-4 17"/>
                            <path d="M1127 305l13 17-3 30-7 43 10 13 7 20-24 24 4 8h43l30-15 22-23 28 6 27-10 20 2 20-25 30-27 16-15 17-3 9-22"/>
                            <path d="M1127 462l-5 23-2 27 7 1-7 29-20 13-20 17v13"/>
                            <path d="M900 488l3 17"/>
                            <path d="M609 653l19-5 34-11 28-9 22-15 28-1 17 15 26 20 20-19 20 5 14-3 13 23"/>
                            <path d="M609 768l21 2 17 7 13-10 13-20 14-25 30 5 16-4 17 5 20-8 7-20 33-3 57-9 43-1"/>
                            <path d="M783 863l20-33 24-13 16-22 40 8 14-3 3-53"/>
                            <path d="M943 638h70l20 10 7 19v36l-43 14h-57l-7-21-1-50z"/>
                            <path d="M900 687l117-7 100-2 23 19 43 11 10 15v14l14 15 16 3 27 28"/>
                            <path d="M1013 747l20 30 20 23 47 12 47 16v19"/>
                            <path d="M997 713l1 17 10 3 5 14"/>
                            <path d="M1080 580l-10 23-20 27-10 37"/>
                            <path d="M958 873l-1 34M900 740l3 40"/>
                        </g>
                        <g class="m-orange">
                            <path d="M660 406l8-6 15 3 17-10 12-3 21-17 14-6h13l13 9 12 2 5 9"/>
                            <path d="M748 367l5 21 2 30 8 15v9l5 11-9 7 8 8 20 17 6 8-10 22 7 7 20 11 3 12 10 5 17-9 23-1 14 7 23-2 10-2"/>
                            <path d="M715 453l12-8 36-2 27 2 13 10 10 15 20 17 30 16 17 9 20 5 10 18"/>
                            <path d="M880 547l-10 11-2 27-8 12-15 15-8 21 10 24 20 31-15 24v25l-10 11-32 7-7 15 7 23-15 14-22 20-36-2-20 17-40 5-19 20-1 15-12 11"/>
                            <path d="M867 688h36M899 687l1-40 7-14"/>
                            <path d="M843 750l-5 30 4 7h68"/>
                            <path d="M842 787l-15 26 3 15-22 24 2 18"/>
                            <path d="M845 777l5-12 33-22 7-13 10-17 10-3"/>
                            <path d="M900 545l50-5 43 9 32-1 32 7 50 2 5 6v22"/>
                            <path d="M1038 585l4-50 8-17 20-16 43-14 29 4 18-5h15l10-17 55-25"/>
                            <path d="M1253 428l54-3 15 10 38-10 29-12"/>
                            <path d="M1389 340l-14 22 5 8 9 1"/>
                            <path d="M900 515l13 27 14 23 20 20"/>
                            <path d="M1348 585l19-7 22-11"/>
                            <path d="M943 580l27 33 17 30"/>
                            <path d="M1038 580v22l15 1 7 7 70 3 10-3 33 3 44-10 100-11 50-12"/>
                            <path d="M1113 580v8l17 20 10 15 17 17-4 23 5 27-18 25-27 22-6 15-24 8-40 10-23 3"/>
                            <path d="M900 650l3-17 30-10 30-5 54 2 26 5 20 25 7 13 2 27v20l-42 25-20 8-3 9-24 5-1-10-49 1-8-18-25-18"/>
                            <path d="M1013 645l17-32 8-5"/>
                            <path d="M1070 660h23l-3-22 18-28"/>
                            <path d="M1035 679h75l10-7 53-5"/>
                            <path d="M1073 698l30 2 24 12 33 5 43 16 62 2"/>
                            <path d="M1265 730v8l-25 14-23 18-24 5-23 12-30 21-23 9-15 25"/>
                            <path d="M1073 712l34 21 33 25 30 25 47 39"/>
                            <path d="M1140 808l33 17 19 18 13 9"/>
                            <path d="M1027 703l30 27 23 27 30 26 30 25"/>
                            <path d="M967 713l1 27v27l-10 26v54l-15 26-8 34"/>
                            <path d="M900 788l43 4 29-9"/>
                            <path d="M1012 743l5 24 8 20 2 23 6 10v17l10 30"/>
                        </g>
                        <g class="m-label">
                            <text x="807" y="400">延庆区</text><text x="940" y="523">昌平区</text><text x="1147" y="474">怀柔区</text>
                            <text x="1257" y="443">密云区</text><text x="1158" y="569">顺义区</text><text x="1337" y="564">平谷区</text>
                            <text x="880" y="668">门头沟区</text><text x="902" y="704">石景山区</text><text x="894" y="768">房山区</text>
                            <text x="975" y="658">海淀区</text><text x="946" y="683">西城区</text><text x="1035" y="675">东城区</text>
                            <text x="1050" y="697">朝阳区</text><text x="985" y="711">丰台区政府</text><text x="997" y="778">大兴区</text><text x="1161" y="684">通州区</text>
                        </g>
                        <path d="M994 671l2.2 5.5h6l-4.8 3.6 1.8 6-5.2-3.5-5.2 3.5 1.8-6-4.8-3.6h6z" fill="#f00"/>
                        <path d="M628.5 304v603M884.5 304v603M1140.500 304v603M608 352.5h781M608 608.5h781M608 864.5h781" stroke="#000" stroke-width="1.3"/>
                        <g class="m-cell">
                            <text x="635" y="372">-82, 234</text><text x="891" y="372">-82, 235</text><text x="1147" y="372">-82, 236</text>
                            <text x="635" y="628">-81, 234</text><text x="891" y="628">-81, 235</text><text x="1147" y="628">-81, 236</text>
                            <text x="635" y="884">-80, 234</text><text x="891" y="884">-80, 235</text><text x="1147" y="884">-80, 236</text>
                        </g>
                        <text class="m-auth" x="1375" y="858">高级开发授权</text>
                    </svg>
                </div>
            </div>
            <div class="dlg-status">当前坐标: x = 116.3476, y = 39.8511</div>
        </div>
    </div>
</div>
</body>
</html>
```

FILE: styles.css
```css
:root {
    --blue: #0070c0;
    --ctx-blue: #005ea6;
    --panel: #f0f0f0;
    --line: #bcbcbc;
    --text: #3c3c3c;
}

* {
    box-sizing: border-box;
}

body {
    margin: 0;
    background: var(--panel);
    color: var(--text);
    font-family: "Noto Sans", "Noto Sans CJK SC", sans-serif;
    font-size: 14.67px;
    overflow: hidden;
}

.defs {
    display: block;
    width: 0;
    height: 0;
}

.app {
    position: relative;
    width: 1724px;
    height: 1002px;
    display: flex;
    flex-direction: column;
    overflow: hidden;
}

/* title bar + tabs */
.top {
    height: 69px;
    flex: none;
    display: flex;
    background: var(--blue);
    border-top: 2px solid #5a5a5a;
    color: #fff;
}

.top-main {
    width: 944px;
    flex: none;
    display: flex;
    flex-direction: column;
}

.qat {
    height: 38px;
    display: flex;
    align-items: center;
}

.q-globe {
    width: 20px;
    height: 20px;
    margin-left: 10px;
}

.q-sep {
    width: 1px;
    height: 24px;
    margin-left: 9px;
    background: #cfe2f2;
}

.q-icons {
    display: flex;
    gap: 16px;
    margin-left: 9px;
}

.q-ic {
    width: 20px;
    height: 20px;
}

.scale-combo {
    width: 149px;
    height: 26px;
    margin-left: 17px;
    display: flex;
    background: #fff;
    border: 1px solid #c8d4de;
    color: #333;
}

.scale-value {
    flex: 1;
    padding-left: 4px;
    line-height: 23px;
    white-space: nowrap;
}

.scale-btn {
    width: 20px;
    background: #e8e8e8;
    border-left: 1px solid #aaa;
    display: flex;
    align-items: center;
    justify-content: center;
}

.q-more {
    margin-left: 24px;
}

.app-title {
    margin-left: 103px;
    color: #79b8ea;
    font-size: 14px;
    white-space: nowrap;
}

.arrow {
    display: block;
    width: 0;
    height: 0;
    border: 3px solid transparent;
    border-top: 4px solid #222;
    border-bottom: 0;
    flex: none;
}

.arrow-white {
    border-top-color: #fff;
}

.tabs {
    height: 29px;
    display: flex;
    align-items: flex-end;
}

.file-btn {
    width: 78px;
    height: 28px;
    display: flex;
    align-items: center;
    gap: 2px;
    padding-left: 26px;
}

.file-ic {
    width: 13px;
    height: 13px;
    background: linear-gradient(90deg, #fff 0 40%, #0070c0 40% 50%, #fff 50%);
    border: 1px solid #fff;
}

.tab {
    width: 60px;
    height: 28px;
    line-height: 28px;
    text-align: center;
}

.tab.active {
    background: var(--panel);
    color: var(--text);
}

.context {
    width: 585px;
    flex: none;
    display: grid;
    grid-template-columns: 75px 76px 75px 88px 91px 90px 90px;
    grid-template-rows: 28px 1fr;
    align-items: center;
    justify-items: center;
    background: var(--ctx-blue);
    border-top: 2px solid #044c84;
}

.ctx-wide {
    grid-column: span 5;
}

.context > div:nth-child(n+4) {
    margin-top: 9px;
}

.top-right {
    flex: 1;
    display: flex;
    flex-direction: column;
}

.win-btns {
    height: 38px;
    display: flex;
    padding-left: 28px;
    align-items: center;
}

.win-ic {
    width: 56px;
    height: 14px;
}

.help-row {
    display: flex;
    align-items: center;
    padding-left: 134px;
    gap: 20px;
}

.chev {
    width: 12px;
    height: 8px;
}

.help {
    width: 22px;
    height: 22px;
}

/* ribbon */
.ribbon {
    height: 119px;
    flex: none;
    display: flex;
    padding-top: 6px;
    background: var(--panel);
    border-bottom: 2px solid #c9c9c9;
}

.group {
    height: 108px;
    flex: none;
    display: flex;
    flex-direction: column;
    border-right: 1px solid #d0d0d0;
}

.w-data { width: 166px; }
.w-arc { width: 118px; }
.w-tile { width: 502px; }
.w-corr { width: 164px; }
.w-vec { width: 72px; }
.w-more { width: 67px; }
.w-frame { width: 127px; }
.w-attr { width: 233px; }
.w-rule { width: 124px; }
.w-mobile { width: 72px; }

.group-body {
    flex: 1;
    display: flex;
    min-height: 0;
}

.pad-8 { padding-left: 8px; }
.pad-5 { padding-left: 5px; }
.pad-4 { padding-left: 4px; }
.ml-4 { margin-left: 4px; }

.group-label {
    height: 16px;
    line-height: 16px;
    text-align: center;
    white-space: nowrap;
}

.big {
    display: flex;
    flex-direction: column;
    align-items: center;
    flex: none;
    white-space: nowrap;
    line-height: 20px;
}

.big .arrow {
    margin-top: 6px;
}

.big.empty {
    padding-top: 70px;
}

.big.text-only {
    padding-top: 45px;
}

.w-77 { width: 77px; }
.w-78 { width: 78px; }
.w-86 { width: 86px; }
.w-88 { width: 88px; }
.w-107 { width: 107px; }
.w-full { width: 100%; }

.big-ic {
    width: 40px;
    height: 40px;
    margin-bottom: 4px;
}

.small-col,
.frame-col {
    display: flex;
    flex-direction: column;
}

.small-col {
    gap: 3px;
    margin-top: -2px;
}

.tile-col {
    width: 111px;
    margin-left: 8px;
}

.attr-col {
    width: 96px;
    margin-left: 4px;
}

.frame-col {
    gap: 12px;
    padding: 8px 0 0 13px;
}

.small {
    height: 26px;
    display: flex;
    align-items: center;
    gap: 4px;
    white-space: nowrap;
}

.small-ic {
    width: 20px;
    height: 20px;
    flex: none;
}

.small-arrow {
    margin-left: 3px;
}

.inner-sep {
    width: 2px;
    height: 78px;
    margin-top: 2px;
    background: #d0d0d0;
    flex: none;
}

.icon-col {
    display: flex;
    flex-direction: column;
    gap: 18px;
    margin-left: 10px;
    padding-top: 12px;
}

/* main area */
.main {
    height: 785px;
    flex: none;
    margin-left: 1px;
    padding: 4px 4px 3px 3px;
    border-left: 1px solid #777;
    display: flex;
    gap: 6px;
}

.panel {
    border: 1px solid var(--line);
    display: flex;
    flex-direction: column;
    flex: none;
}

.left-panel {
    width: 274px;
}

.right-panel {
    width: 276px;
}

.panel-head {
    height: 44px;
    flex: none;
    display: flex;
    align-items: center;
    padding: 0 13px 0 15px;
}

.panel-title {
    flex: 1;
    font-size: 18.5px;
    color: #555;
}

.latin {
    font-size: 16.8px;
}

.pin,
.close {
    width: 10px;
    height: 10px;
}

.close {
    margin-left: 11px;
}

.tree-box {
    margin: 0 1px 2px;
    flex: 1;
    min-height: 0;
    border: 1px solid var(--line);
    border-top-width: 0;
    display: flex;
    flex-direction: column;
    background: #fff;
}

.tree-main {
    height: 708px;
    flex: none;
    display: flex;
}

.tree {
    flex: 1;
    overflow: hidden;
    padding-top: 1px;
}

.row {
    height: 22px;
    display: flex;
    align-items: center;
    white-space: nowrap;
    color: #444;
}

.lv0 { padding-left: 5px; }
.lv1 { padding-left: 23px; }
.lv2 { padding-left: 41px; }
.lv3 { padding-left: 59px; }
.lv4 { padding-left: 91px; }

.exp {
    display: block;
    width: 10px;
    height: 10px;
    flex: none;
    background: linear-gradient(135deg, transparent 50%, #777 50%);
    transform: scale(.7);
}

.exp.shut {
    background: #666;
    clip-path: polygon(20% 0, 80% 50%, 20% 100%);
    transform: none;
}

.chk {
    width: 14px;
    height: 14px;
    margin-left: 4px;
    flex: none;
}

.lv4 .chk {
    margin-left: 0;
}

.ti {
    width: 16px;
    height: 16px;
    margin-left: 4px;
    flex: none;
}

.row span {
    margin-left: 5px;
    padding-right: 6px;
    line-height: 22px;
}

.row .hl {
    flex: 1;
    background: #d9d9d9;
    margin-left: 1px;
    padding-left: 4px;
}

.leg {
    width: 12px;
    height: 3px;
    margin: 0 2px 0 6px;
    background: #f0f0f0;
    flex: none;
}

.leg.grey { background: #c6ccd4; }
.leg.pale { background: #f2ecd6; }

.vscroll {
    width: 21px;
    flex: none;
    display: flex;
    flex-direction: column;
}

.sb-btn {
    height: 22px;
    flex: none;
    background: #ececec;
    display: flex;
    align-items: center;
    justify-content: center;
}

.sb-btn svg {
    width: 10px;
    height: 6px;
}

.sb-thumb {
    height: 282px;
    flex: none;
    background: #cbcbcb;
}

.sb-track {
    flex: 1;
    background: #e9e9e9;
}

.hscroll {
    flex: 1;
    display: flex;
    background: #e9e9e9;
}

.hb-btn {
    width: 21px;
    flex: none;
    display: flex;
    align-items: center;
    justify-content: center;
}

.hb-btn svg {
    width: 6px;
    height: 10px;
}

.hb-thumb {
    width: 128px;
    flex: none;
    background: #cbcbcb;
}

.hb-track {
    flex: 1;
}

.hb-corner {
    width: 21px;
    flex: none;
    background: #f0f0f0;
}

/* document area */
.center {
    width: 1153px;
    flex: none;
    display: flex;
    flex-direction: column;
}

.doc-tabs {
    height: 30px;
    flex: none;
    display: flex;
    align-items: flex-end;
    padding-left: 8px;
}

.doc-tab {
    height: 28px;
    width: 119px;
    display: flex;
    align-items: center;
    gap: 4px;
    color: #666;
    padding-left: 7px;
}

.doc-tab.active {
    width: 114px;
    background: #a6a6a6;
    color: #fff;
    padding-left: 15px;
}

.tab-ic {
    width: 16px;
    height: 16px;
}

.tab-x {
    width: 9px;
    height: 9px;
    margin-left: 12px;
    filter: brightness(0) invert(1);
}

.doc-more {
    margin: 0 6px 14px auto;
}

.frame {
    flex: 1;
    min-height: 0;
    display: grid;
    grid-template-columns: 16px 1116px 17px;
    grid-template-rows: 18px 710px 16px;
    border: 2px solid var(--line);
    background: #fff;
}

.ruler-corner {
    background: var(--panel);
    border: 1px solid #ddd;
    padding: 3px 0 0 3px;
}

.ruler-corner span {
    display: block;
    width: 9px;
    height: 9px;
    border-left: 2px solid #000;
    border-bottom: 2px solid #000;
}

.ruler-top,
.ruler-left,
.canvas {
    display: block;
    width: 100%;
    height: 100%;
}

.ruler-top {
    grid-column: 2 / 4;
    width: 1116px;
}

.ruler-text {
    font-family: "Liberation Mono", monospace;
    font-size: 11.5px;
    fill: #222;
}

.vbar {
    background: var(--panel);
    display: flex;
    flex-direction: column;
    align-items: center;
    padding: 8px 0 9px;
}

.vbar .arrow {
    border-top-color: #555;
}

.arrow.up {
    border-top: 0;
    border-bottom: 4px solid #555;
}

.vbar-thumb {
    width: 14px;
    height: 18px;
    margin-top: 7px;
    margin-bottom: auto;
    border: 1px solid #999;
    border-radius: 2px;
    background: #eee;
    display: flex;
    flex-direction: column;
    justify-content: center;
    gap: 2px;
    padding: 0 2px;
}

.vbar-thumb b {
    height: 1px;
    background: #888;
}

.hbar {
    background: var(--panel);
    display: flex;
    align-items: center;
    padding: 0 7px;
}

.arrow.left,
.arrow.right {
    border: 3px solid transparent;
}

.arrow.left {
    border-left: 0;
    border-right: 4px solid #333;
}

.arrow.right {
    border-right: 0;
    border-left: 4px solid #333;
}

.hbar-thumb {
    width: 18px;
    height: 14px;
    margin-left: 12px;
    margin-right: auto;
    border: 1px solid #999;
    border-radius: 2px;
    background: #eee;
    display: flex;
    justify-content: center;
    gap: 2px;
    padding: 2px 0;
}

.hbar-thumb b {
    width: 1px;
    background: #888;
}

.bar-corner {
    border-left: 1px solid #444;
    border-top: 1px solid #444;
}

/* map strokes */
.m-grey,
.m-grey-in,
.m-yellow,
.m-orange,
.m-blue {
    fill: none;
    stroke-linejoin: round;
    stroke-linecap: round;
}

.m-grey { stroke: #b7c1cc; stroke-width: 3.2; }
.m-grey-in { stroke: #eef1f4; stroke-width: 1; }
.m-yellow { stroke: #ffedb6; stroke-width: 3.5; }
.m-orange { stroke: #ffb15f; stroke-width: 3.3; }
.m-blue { stroke: #bcd4f5; stroke-width: 1.5; }

.m-region {
    fill: #f6f6f6;
    stroke: #e2e2e2;
}

.m-shield {
    font-family: "Liberation Sans", sans-serif;
    font-weight: bold;
    font-size: 14px;
    fill: #fff;
}

.m-label text {
    font-size: 14.67px;
    fill: #a6a6a6;
    text-anchor: middle;
}

.m-cell text {
    font-size: 14.67px;
    fill: #f00;
}

.m-auth {
    font-size: 14.67px;
    fill: #888;
    text-anchor: end;
}

/* right panel */
.gdb-tools {
    height: 36px;
    flex: none;
    display: flex;
    align-items: center;
    gap: 10.5px;
    padding: 2px 0 0 10px;
}

.t-ic {
    width: 22px;
    height: 22px;
    flex: none;
}

.t-sep {
    width: 1px;
    height: 24px;
    margin: 0 -2px;
    background: #cfcfcf;
}

.gdb-tree {
    height: 660px;
    flex: none;
    margin: 0 0 0 2px;
    background: #fff;
    border: 1px solid #bbb;
    border-bottom-width: 2px;
    padding-top: 2px;
}

.gdb-row {
    height: 22px;
    display: flex;
    align-items: center;
    padding-left: 6px;
    font-family: "Liberation Mono", monospace;
    font-size: 13px;
    color: #333;
}

.gdb-row .exp {
    transform: none;
}

.gdb-row .ti {
    margin-left: 0;
}

.gdb-row span {
    margin-left: 8px;
    line-height: 22px;
}

.gdb-row .hl {
    flex: 1;
    background: #d9d9d9;
    margin-left: 4px;
    padding-left: 4px;
}

.gdb-tabs {
    height: 32px;
    margin: 1px 0 0 5px;
    display: flex;
    flex: none;
}

.gdb-tab {
    display: flex;
    align-items: center;
    gap: 4px;
    padding: 0 8px 0 7px;
}

.gdb-tab.active {
    width: 112px;
    background: #d4d4d4;
    padding-left: 4px;
    gap: 6px;
    font-size: 13.6px;
}

/* status bar */
.status {
    flex: 1;
    margin-left: 1px;
    border-left: 1px solid #777;
    border-top: 1px solid #bbb;
    border-bottom: 1px solid #444;
    display: flex;
    align-items: center;
    padding-left: 274px;
}

.status-box {
    width: 266px;
    height: 15px;
    background: #fff;
}

.status-text {
    margin: 0 17px 3px auto;
    color: #444;
    font-size: 15.4px;
    white-space: nowrap;
}

.grip {
    width: 10px;
    height: 10px;
    margin: 14px 2px 0 0;
}

/* red annotation drawn over the ribbon */
.mark-box {
    position: absolute;
    left: 271px;
    top: 55px;
    width: 523px;
    height: 119px;
    border: 3px solid #ff3b3b;
}

/* tile browser window */
.dialog {
    position: absolute;
    left: 393px;
    top: 233px;
    width: 1005px;
    height: 712px;
    display: flex;
    flex-direction: column;
    border: 1px solid #2c3c4c;
    border-radius: 6px 6px 3px 3px;
    background:
        linear-gradient(100deg, transparent 48%, rgba(120, 130, 130, .25) 48.6%, transparent 50%, transparent 54%, rgba(110, 160, 170, .3) 55%, rgba(110, 160, 170, .3) 64%, transparent 65%) 0 16px / 100% 16px no-repeat,
        linear-gradient(115deg, transparent 60%, rgba(120, 120, 120, .28) 62%, transparent 64%) 0 0 / 100% 33px no-repeat,
        linear-gradient(180deg, #b5d3f3 0, #b5d3f3 28%, #9cc0cc 36%, #c0daf3 42%, #b4d3f5 70%, #b8d5f4 100%);
    box-shadow: 3px 3px 16px 4px rgba(0, 0, 0, .65);
    padding: 0 7px 6px;
}

.dlg-title {
    height: 33px;
    flex: none;
    display: flex;
    justify-content: space-between;
    color: #111;
    line-height: 33px;
    padding-left: 1px;
}

.dlg-btns {
    display: flex;
    height: 24px;
    margin-top: -1px;
    border: 1px solid #4a5a6e;
    border-top: 0;
    border-radius: 0 0 5px 5px;
    overflow: hidden;
}

.dlg-btn {
    height: 100%;
    display: flex;
    align-items: center;
    justify-content: center;
    background: linear-gradient(180deg, #d3e0ee, #a9bbd0 50%, #8aa0b8);
    border-right: 1px solid #4a5a6e;
}

.dlg-btn.min { width: 34px; }
.dlg-btn.max { width: 33px; }

.dlg-btn.shut {
    width: 54px;
    border-right: 0;
    background: linear-gradient(180deg, #e6a89c, #d2705c 45%, #bf3422 60%, #d2604a);
}

.dlg-btn.shut svg {
    width: 16px;
    height: 16px;
}

.dlg-btn.min b {
    width: 16px;
    height: 5px;
    margin-top: 8px;
    background: #eef2f6;
    border: 1px solid #3c4c5c;
}

.dlg-btn.max b {
    width: 14px;
    height: 11px;
    border: 2px solid #3c4c5c;
    background: #cfdce9;
}

.dlg-client {
    flex: 1;
    min-height: 0;
    display: flex;
    flex-direction: column;
    background: var(--panel);
    border: 1px solid #6a7f92;
    border-bottom: 0;
}

.path-row {
    height: 36px;
    flex: none;
    display: flex;
    align-items: center;
    padding-left: 20px;
}

.path-label {
    width: 104px;
    color: #444;
    white-space: nowrap;
}

.path-input {
    width: 755px;
    height: 24px;
    display: flex;
    background: #fff;
    border: 1px solid #aaa;
    line-height: 22px;
}

.path-input span {
    flex: 1;
    padding-left: 4px;
}

.path-input b {
    width: 20px;
    background: var(--panel);
    border-left: 1px solid #aaa;
    text-align: center;
    font-weight: bold;
    line-height: 16px;
}

.mini-combo {
    width: 50px;
    height: 24px;
    margin-left: 10px;
    display: flex;
    background: #fff;
    border: 1px solid #aaa;
    align-items: center;
}

.swatch {
    width: 21px;
    height: 11px;
    margin-left: 7px;
    border: 1px solid #444;
}

.mini-btn {
    flex: 1;
    align-self: stretch;
    background: var(--panel);
    border-left: 1px solid #aaa;
    display: flex;
    align-items: center;
    justify-content: center;
}

.mini-btn .arrow {
    border-top-color: #666;
}

.path-search {
    width: 20px;
    height: 20px;
    margin-left: 11px;
}

.dlg-content {
    height: 603px;
    flex: none;
    display: flex;
}

.dlg-side {
    width: 206px;
    flex: none;
    padding: 2px 0 0 6px;
    display: flex;
    flex-direction: column;
}

.fs {
    width: 192px;
    margin: 0;
    padding: 0;
    border: 1px solid var(--line);
    min-width: 0;
}

/* bottom padding keeps the legend text a little above the fieldset line */
.fs legend {
    margin-left: 9px;
    padding: 0 5px 6px;
    line-height: 20px;
    color: #555;
}

.fs-level { height: 128px; }
.fs-show { height: 133px; margin-top: 9px; }
.fs-info { height: 315px; margin-top: 11px; }

.level-box {
    display: flex;
    padding: 18px 0 0 56px;
}

.slider {
    width: 24px;
    height: 70px;
    flex: none;
}

.level-marks {
    height: 70px;
    margin-left: 23px;
    display: flex;
    flex-direction: column;
    justify-content: space-between;
    line-height: 20px;
}

.show-list {
    padding: 11px 0 0 10px;
    display: flex;
    flex-direction: column;
    gap: 12px;
}

.show-row {
    height: 20px;
    display: flex;
    align-items: center;
    gap: 4px;
    line-height: 20px;
}

.tick,
.tick-off {
    width: 13px;
    height: 13px;
    flex: none;
}

.tick-off {
    background: #fff;
    border: 1px solid #aaa;
}

.info-grid {
    padding: 10px 0 0 13px;
    display: grid;
    grid-template-columns: 73px 97px;
    grid-auto-rows: 25px;
    row-gap: 9.8px;
    align-items: center;
}

.info-grid span {
    white-space: nowrap;
}

.val {
    height: 25px;
    line-height: 23px;
    padding: 0 3px;
    border: 1px solid #aaa;
    white-space: nowrap;
    overflow: hidden;
    background: #f0f0f0;
    color: #444;
}

.tile-map {
    width: 781px;
    flex: none;
    outline: 1px solid #aaa;
    background: #fff;
}

.tile-svg {
    display: block;
    width: 781px;
    height: 603px;
}

.dlg-status {
    flex: 1;
    display: flex;
    align-items: center;
    justify-content: flex-end;
    padding: 0 15px 4px 0;
    color: #444;
    font-size: 15px;
    letter-spacing: .5px;
    border-top: 1px solid #aaa;
}
```
